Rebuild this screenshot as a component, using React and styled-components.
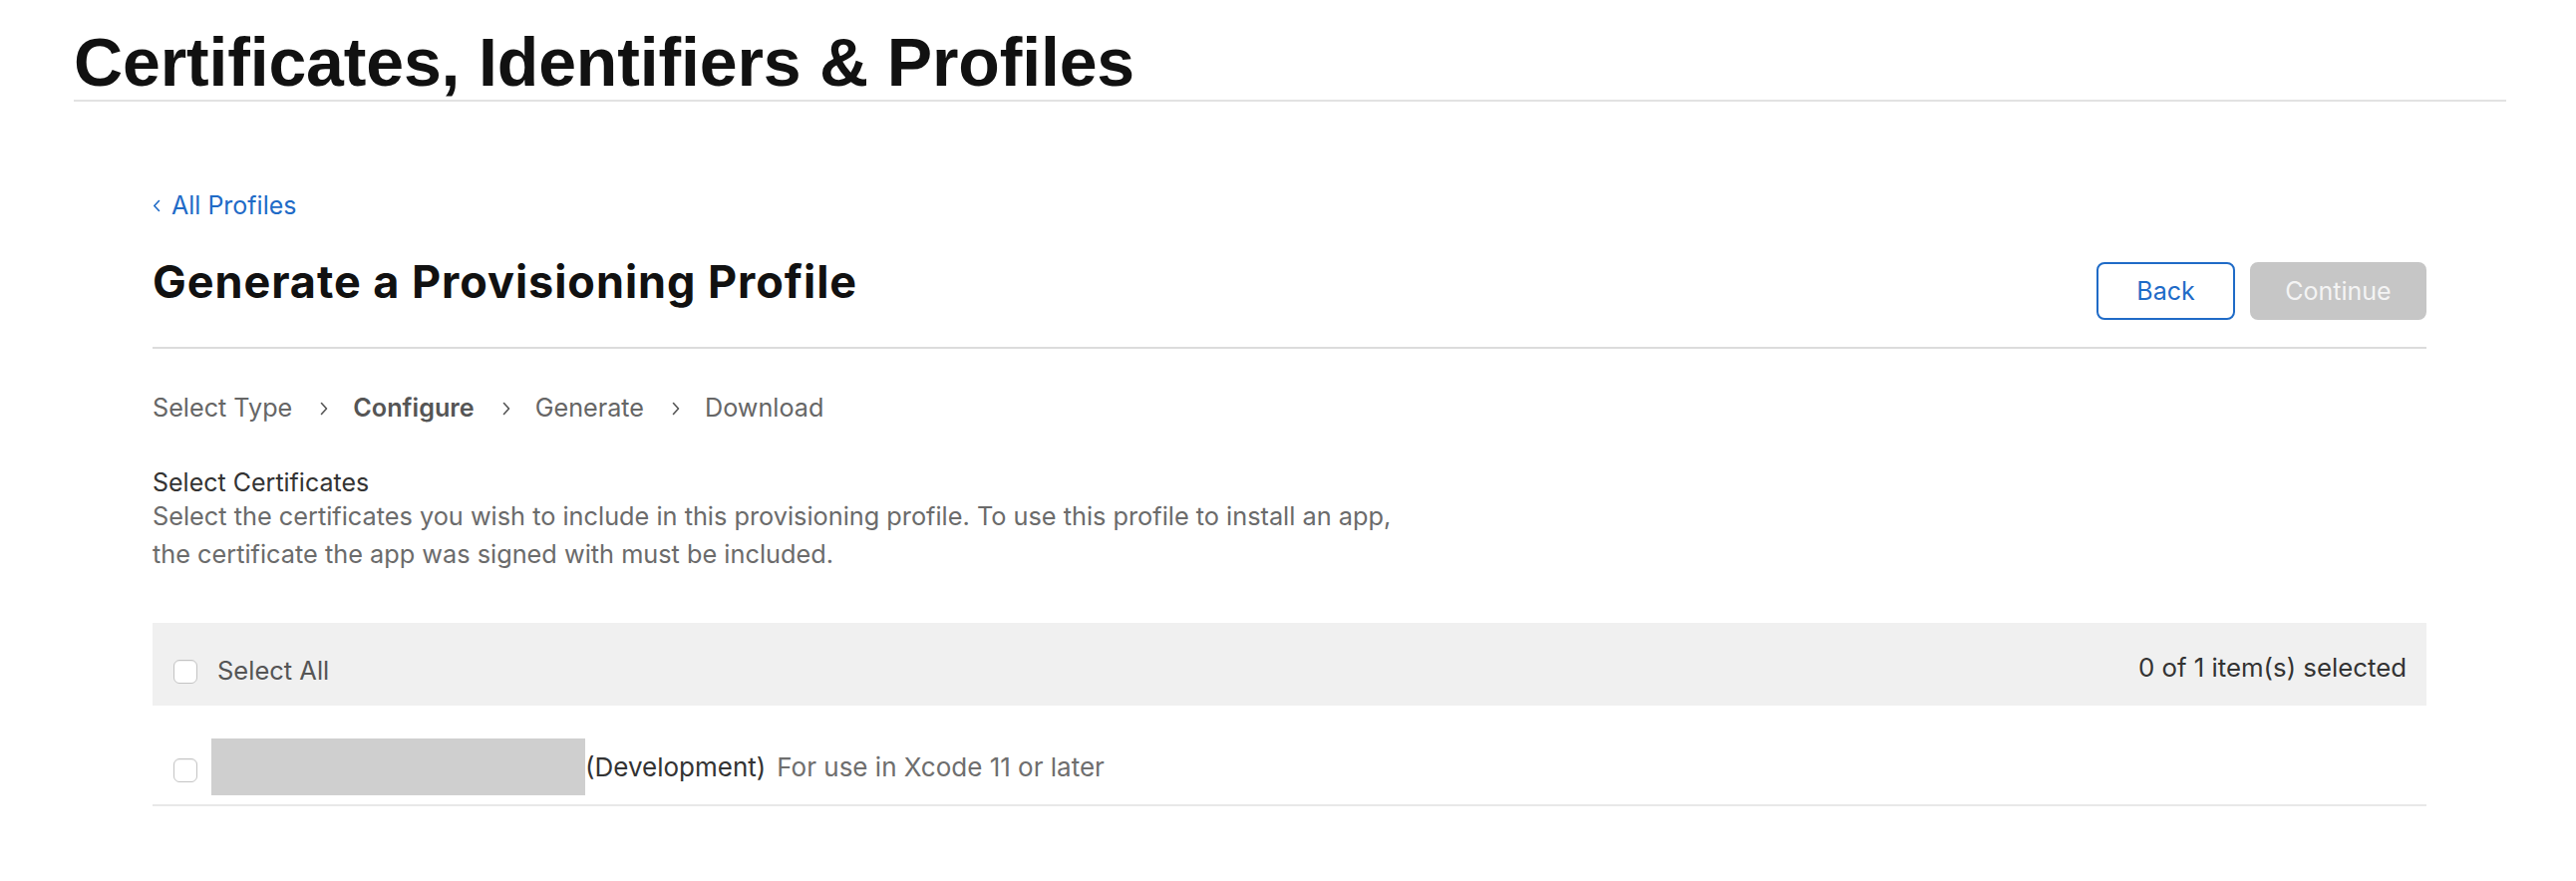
import styled, { createGlobalStyle } from 'styled-components';

const GlobalStyle = createGlobalStyle`
  body {
    margin: 0;
    background: #ffffff;
    font-family: Inter, "Noto Sans", sans-serif;
  }
`;

const Page = styled.div`
  padding: 0 70px 0 74px;
`;

const Masthead = styled.h1`
  margin: 0;
  padding: 28px 0 4px;
  border-bottom: 2px solid #e2e2e2;
  font-family: "Liberation Sans", Arial, sans-serif;
  font-weight: 700;
  font-size: 68px;
  line-height: 68px;
  letter-spacing: -0.15px;
  color: #111111;
`;

const Main = styled.main`
  padding: 0 80px 60px 79px;
`;

const BackLink = styled.a`
  display: inline-flex;
  align-items: center;
  gap: 11px;
  margin-top: 90px;
  color: #1f6bc7;
  font-size: 25px;
  line-height: 29px;
  text-decoration: none;
  cursor: pointer;

  svg {
    width: 8px;
    height: 13px;
  }
`;

const HeaderRow = styled.div`
  display: flex;
  justify-content: space-between;
  align-items: flex-start;
  margin-top: 36px;
  padding-bottom: 27px;
  border-bottom: 2px solid #dcdcdc;
`;

const PageTitle = styled.h2`
  margin: 0;
  font-size: 45px;
  line-height: 52px;
  font-weight: 700;
  letter-spacing: 0.95px;
  color: #111111;
`;

const Actions = styled.div`
  display: flex;
  gap: 15px;
  margin-top: 6px;
`;

const Button = styled.button`
  height: 58px;
  width: ${p => p.$width}px;
  border-radius: 8px;
  font-family: inherit;
  font-size: 25px;
  cursor: ${p => (p.$disabled ? 'default' : 'pointer')};
  border: 2px solid ${p => (p.$disabled ? '#c6c6c6' : '#1f6bc7')};
  background: ${p => (p.$disabled ? '#c6c6c6' : '#ffffff')};
  color: ${p => (p.$disabled ? '#f4f4f4' : '#1f6bc7')};
`;

const Steps = styled.ol`
  display: flex;
  align-items: center;
  list-style: none;
  margin: 45px 0 0;
  padding: 0;
  font-size: 25.2px;
  line-height: 29px;
  color: #666666;
`;

const Step = styled.li`
  display: flex;
  align-items: center;
  font-weight: ${p => (p.$current ? 600 : 400)};
  color: ${p => (p.$current ? '#555555' : '#666666')};
`;

const StepChevron = styled.svg`
  width: 8px;
  height: 14px;
  margin: 0 25px 0 28px;
  color: #555555;
`;

const SectionTitle = styled.h3`
  margin: 45px 0 0;
  font-size: 25px;
  line-height: 30px;
  font-weight: 400;
  color: #333333;
`;

const Description = styled.p`
  margin: 0;
  max-width: 1270px;
  font-size: 25.3px;
  line-height: 38px;
  color: #6b6b6b;
`;

const Table = styled.div`
  margin-top: 50px;
`;

const TableHeader = styled.div`
  display: flex;
  align-items: center;
  height: 83px;
  box-sizing: border-box;
  padding: 24px 20px 12px 21px;
  background: #f0f0f0;
`;

const Checkbox = styled.span`
  flex: none;
  width: 24px;
  height: 24px;
  box-sizing: border-box;
  border: 1px solid #c4c4c4;
  border-radius: 6px;
  background: #ffffff;
  box-shadow: inset 0 1px 1px rgba(0, 0, 0, 0.06);
  margin-top: ${p => p.$offset || 0}px;
`;

const SelectAll = styled.span`
  margin-left: 20px;
  font-size: 25.5px;
  color: #555555;
`;

const Counter = styled.span`
  margin-left: auto;
  margin-top: -6px;
  font-size: 25.8px;
  color: #333333;
`;

const Row = styled.div`
  display: flex;
  align-items: center;
  padding: 33px 21px 9px;
  border-bottom: 2px solid #e8e8e8;
  font-size: 26px;
`;

const Redacted = styled.span`
  width: 375px;
  height: 57px;
  margin-left: 14px;
  background: #cfcfcf;
`;

const CertName = styled.span`
  color: #333333;
`;

const CertNote = styled.span`
  margin-left: 11px;
  color: #6e6e6e;
`;

const chevron = (points) => (
  <path d={points} fill="none" stroke="currentColor" strokeWidth="1.6" strokeLinecap="round" strokeLinejoin="round" />
);

const steps = ['Select Type', 'Configure', 'Generate', 'Download'];

export default function App() {
  return (
    <Page>
      <GlobalStyle />
      <Masthead>Certificates, Identifiers &amp; Profiles</Masthead>
      <Main>
        <BackLink>
          <svg viewBox="0 0 8 13">{chevron('M6.5 1.5 L1.8 6.5 L6.5 11.5')}</svg>
          All Profiles
        </BackLink>

        <HeaderRow>
          <PageTitle>Generate a Provisioning Profile</PageTitle>
          <Actions>
            <Button $width={139}>Back</Button>
            <Button $width={177} $disabled>Continue</Button>
          </Actions>
        </HeaderRow>

        <Steps>
          {steps.map((label, i) => (
            <Step key={label} $current={label === 'Configure'}>
              {label}
              {i < steps.length - 1 && (
                <StepChevron viewBox="0 0 8 14">{chevron('M1.5 1.5 L6.5 7 L1.5 12.5')}</StepChevron>
              )}
            </Step>
          ))}
        </Steps>

        <SectionTitle>Select Certificates</SectionTitle>
        <Description>
          Select the certificates you wish to include in this provisioning profile. To use this profile to install an app,
          the certificate the app was signed with must be included.
        </Description>

        <Table>
          <TableHeader>
            <Checkbox $offset={3} />
            <SelectAll>Select All</SelectAll>
            <Counter>0 of 1 item(s) selected</Counter>
          </TableHeader>
          <Row>
            <Checkbox $offset={6} />
            <Redacted />
            <CertName>(Development)</CertName>
            <CertNote>For use in Xcode 11 or later</CertNote>
          </Row>
        </Table>
      </Main>
    </Page>
  );
}
